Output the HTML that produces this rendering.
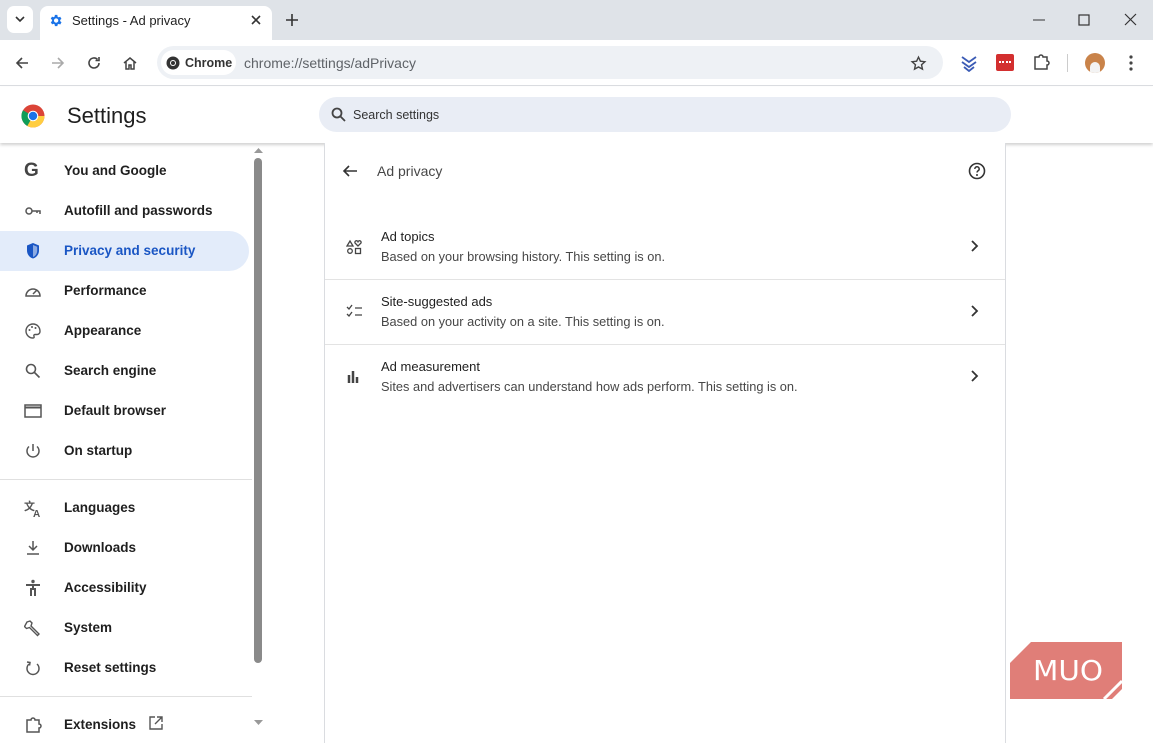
<!DOCTYPE html>
<html><head><meta charset="utf-8"><style>
*{box-sizing:border-box;margin:0;padding:0}
body{width:1153px;height:731px;overflow:hidden;background:#fff;font-family:"Liberation Sans",Arial,sans-serif;position:relative;color:#1f1f1f}
.abs{position:absolute}
.tabbar{left:0;top:0;width:1153px;height:40px;background:#dfe3e8}
.tab{left:40px;top:6px;width:232px;height:34px;background:#fff;border-radius:8px 8px 0 0}
.toolbar{left:0;top:40px;width:1153px;height:46px;background:#fff;border-bottom:1px solid #dadce0}
.omni{left:157px;top:46px;width:786px;height:33px;background:#eef1f5;border-radius:17px}
.chip{left:161px;top:50px;width:75px;height:25px;background:#fff;border-radius:13px}
.hdr{left:0;top:87px;width:1153px;height:56px;background:#fff;box-shadow:0 2px 3px rgba(0,0,0,.18)}
.search{left:319px;top:97px;width:692px;height:35px;background:#e9edf5;border-radius:18px}
.nav{left:0;font-size:13.5px;font-weight:bold;color:#1f1f1f;height:40px;line-height:40px;padding-left:64px;width:249px;white-space:nowrap}
.nav.sel{background:#e3ecfa;color:#1a56c4;border-radius:0 20px 20px 0}
.ic{position:absolute;left:24px;top:11px;width:18px;height:18px}
.card{left:324px;top:143px;width:682px;height:600px;border-left:1px solid #dadce0;border-right:1px solid #dadce0;background:#fff}
.row{left:325px;width:680px;height:65px}
.row .t{position:absolute;left:56px;top:14px;font-size:13px;color:#1f1f1f}
.row .s{position:absolute;left:56px;top:34px;font-size:12.8px;color:#474747}
.row .ch{position:absolute;right:26px;top:24px}
.sep{left:325px;width:680px;height:1px;background:#e3e3e3}
</style></head><body>
<div class="abs tabbar"></div>
<div class="abs" style="left:7px;top:6px;width:26px;height:27px;background:#fff;border-radius:7px"></div>
<svg class="abs" style="left:14px;top:14px" width="12" height="10"><path d="M2 3l4 4 4-4" stroke="#333" stroke-width="1.6" fill="none"/></svg>
<div class="abs tab"></div>
<svg class="abs" style="left:48px;top:13px" width="15" height="15" viewBox="0 0 24 24"><path fill="#1a73e8" d="M19.4 13a7.5 7.5 0 000-2l2.1-1.6-2-3.5-2.5 1a7 7 0 00-1.7-1L15 3h-4l-.4 2.7a7 7 0 00-1.7 1l-2.500-1-2 3.5L6.6 11a7.5 7.5 0 000 2l-2.1 1.6 2 3.5 2.5-1a7 7 0 001.7 1L11 21h4l.4-2.7a7 7 0 001.7-1l2.5 1 2-3.5zM13 15.5a3.5 3.5 0 110-7 3.5 3.5 0 010 7z"/></svg>
<div class="abs" style="left:72px;top:13px;font-size:13px;color:#1f1f1f">Settings - Ad privacy</div>
<svg class="abs" style="left:250px;top:14px" width="12" height="12"><path d="M2 2l8 8M10 2l-8 8" stroke="#333" stroke-width="1.6"/></svg>
<svg class="abs" style="left:285px;top:13px" width="14" height="14"><path d="M7 1v12M1 7h12" stroke="#333" stroke-width="1.6"/></svg>
<svg class="abs" style="left:1033px;top:19px" width="12" height="2"><path d="M0 1h12" stroke="#333"/></svg>
<svg class="abs" style="left:1078px;top:14px" width="12" height="12"><rect x="1" y="1" width="10" height="10" fill="none" stroke="#333" stroke-width="1.2"/></svg>
<svg class="abs" style="left:1124px;top:13px" width="13" height="13"><path d="M1 1l11 11M12 1L1 12" stroke="#333" stroke-width="1.2"/></svg>

<div class="abs toolbar"></div>
<svg class="abs" style="left:14px;top:55px" width="16" height="16"><path d="M14 8H3M8 3L3 8l5 5" stroke="#444" stroke-width="1.6" fill="none"/></svg>
<svg class="abs" style="left:50px;top:55px" width="16" height="16"><path d="M2 8h11M8 3l5 5-5 5" stroke="#aaa" stroke-width="1.6" fill="none"/></svg>
<svg class="abs" style="left:86px;top:55px" width="16" height="16"><path d="M13 8a5 5 0 11-1.5-3.6M13 2v3.5H9.5" stroke="#444" stroke-width="1.6" fill="none"/></svg>
<svg class="abs" style="left:122px;top:55px" width="16" height="16"><path d="M2 8l6-5 6 5M4 6.5V14h3v-4h2v4h3V6.5" stroke="#444" stroke-width="1.5" fill="none"/></svg>
<div class="abs omni"></div>
<div class="abs chip"></div>
<svg class="abs" style="left:166px;top:56px" width="14" height="14" viewBox="0 0 14 14"><circle cx="7" cy="7" r="6.5" fill="#333"/><circle cx="7" cy="7" r="3" fill="#fff"/><circle cx="7" cy="7" r="2" fill="#333"/></svg>
<div class="abs" style="left:185px;top:56px;font-size:12.5px;font-weight:bold;color:#333">Chrome</div>
<div class="abs" style="left:244px;top:55px;font-size:14px;color:#5f6368">chrome://settings/adPrivacy</div>
<svg class="abs" style="left:910px;top:55px" width="17" height="17" viewBox="0 0 24 24"><path d="M12 3l2.7 5.8 6.3.7-4.7 4.3 1.3 6.2L12 16.9 6.4 20l1.3-6.2L3 9.5l6.3-.7z" fill="none" stroke="#444" stroke-width="2"/></svg>
<svg class="abs" style="left:960px;top:54px" width="18" height="18"><path d="M2 3l7 5 7-5M2 8l7 5 7-5M4 13l5 4 5-4" stroke="#3b5bb5" stroke-width="1.8" fill="none"/></svg>
<div class="abs" style="left:996px;top:54px;width:18px;height:17px;background:#d32f2f;border-radius:2px"></div>
<div class="abs" style="left:999px;top:61px;width:12px;height:3px;border-top:2px dotted #fff"></div>
<svg class="abs" style="left:1032px;top:53px" width="18" height="18"><path d="M3 4h4a2 2 0 014 0h4v4a2 2 0 010 4v4H3z" fill="none" stroke="#444" stroke-width="1.5"/></svg>
<div class="abs" style="left:1067px;top:54px;width:1px;height:18px;background:#ccc"></div>
<div class="abs" style="left:1085px;top:53px;width:20px;height:20px;border-radius:50%;background:#c9834a;overflow:hidden"><div style="position:absolute;left:5px;top:9px;width:10px;height:12px;background:#f3f3f3;border-radius:5px 5px 0 0"></div></div>
<svg class="abs" style="left:1128px;top:54px" width="6" height="18"><circle cx="3" cy="3" r="1.6" fill="#444"/><circle cx="3" cy="9" r="1.6" fill="#444"/><circle cx="3" cy="15" r="1.6" fill="#444"/></svg>

<div class="abs hdr"></div>
<svg class="abs" style="left:21px;top:104px" width="24" height="24" viewBox="0 0 24 24"><circle cx="12" cy="12" r="11.5" fill="#db4437"/><path d="M12 12L2 6.2A11.5 11.5 0 006.3 22z" fill="#0f9d58"/><path d="M12 12l-5.7 10A11.5 11.5 0 0023.5 12z" fill="#ffcd40"/><circle cx="12" cy="12" r="5.3" fill="#fff"/><circle cx="12" cy="12" r="4.2" fill="#1a73e8"/></svg>
<div class="abs" style="left:67px;top:103px;font-size:22px;color:#1f1f1f">Settings</div>
<div class="abs search"></div>
<svg class="abs" style="left:331px;top:107px" width="15" height="15"><circle cx="6" cy="6" r="4.5" fill="none" stroke="#444" stroke-width="1.8"/><path d="M9.5 9.5l4.5 4.5" stroke="#444" stroke-width="1.8"/></svg>
<div class="abs" style="left:353px;top:108px;font-size:12.5px;color:#333">Search settings</div>

<div class="abs nav" style="top:151px"><span class="ic" style="font-weight:bold;font-size:19px;line-height:18px;color:#444;top:11px">G</span>You and Google</div>
<div class="abs nav" style="top:191px"><svg class="ic" viewBox="0 0 18 18"><circle cx="5" cy="9" r="3" fill="none" stroke="#555" stroke-width="1.5"/><path d="M8 9h8v3M13 9v2" stroke="#555" stroke-width="1.5" fill="none"/></svg>Autofill and passwords</div>
<div class="abs nav sel" style="top:231px"><svg class="ic" viewBox="0 0 18 18"><path d="M9 1L3 3.5v5c0 4 2.6 7 6 8 3.4-1 6-4 6-8v-5z" fill="#1a56c4"/><path d="M9 3v12c2.4-.9 4.2-3.3 4.2-6.5V4.7z" fill="#fff" opacity=".5"/></svg>Privacy and security</div>
<div class="abs nav" style="top:271px"><svg class="ic" viewBox="0 0 18 18"><path d="M2 14a7 7 0 1114 0z" fill="none" stroke="#555" stroke-width="1.5"/><path d="M9 12l4-4" stroke="#555" stroke-width="1.5"/></svg>Performance</div>
<div class="abs nav" style="top:311px"><svg class="ic" viewBox="0 0 18 18"><path d="M9 2a7 7 0 000 14c1 0 1.5-.8 1-1.6-.5-.9 0-1.9 1-1.9h2a3 3 0 003-3C16 5 13 2 9 2z" fill="none" stroke="#555" stroke-width="1.4"/><circle cx="5.5" cy="8" r="1" fill="#555"/><circle cx="8" cy="5" r="1" fill="#555"/><circle cx="11.5" cy="6" r="1" fill="#555"/></svg>Appearance</div>
<div class="abs nav" style="top:351px"><svg class="ic" viewBox="0 0 18 18"><circle cx="7" cy="7" r="4.5" fill="none" stroke="#555" stroke-width="1.6"/><path d="M10.5 10.5l5 5" stroke="#555" stroke-width="1.6"/></svg>Search engine</div>
<div class="abs nav" style="top:391px"><svg class="ic" viewBox="0 0 18 18"><rect x="1" y="3" width="16" height="12" fill="none" stroke="#555" stroke-width="1.5"/><path d="M1 5.5h16" stroke="#555" stroke-width="2"/></svg>Default browser</div>
<div class="abs nav" style="top:431px"><svg class="ic" viewBox="0 0 18 18"><path d="M9 2v7M5 4.5a6 6 0 108 0" fill="none" stroke="#555" stroke-width="1.5"/></svg>On startup</div>
<div class="abs" style="left:0;top:479px;width:252px;height:1px;background:#e0e0e0"></div>
<div class="abs nav" style="top:488px"><svg class="ic" viewBox="0 0 18 18"><text x="0" y="11" font-size="11" fill="#555" font-family="Noto Sans CJK SC,sans-serif">文</text><text x="9" y="18" font-size="10" fill="#555" font-family="Liberation Sans,sans-serif">A</text></svg>Languages</div>
<div class="abs nav" style="top:528px"><svg class="ic" viewBox="0 0 18 18"><path d="M9 2v9M5 7l4 4 4-4M3 15h12" fill="none" stroke="#555" stroke-width="1.5"/></svg>Downloads</div>
<div class="abs nav" style="top:568px"><svg class="ic" viewBox="0 0 18 18"><circle cx="9" cy="2.5" r="1.7" fill="#555"/><path d="M2 6h14M9 6v5M7 17V10h4v7" stroke="#555" stroke-width="2" fill="none"/></svg>Accessibility</div>
<div class="abs nav" style="top:608px"><svg class="ic" viewBox="0 0 18 18"><path d="M3 3l3-1 2 2-1 3 8 8-1.5 1.5-8-8-3 1-2-2z" fill="none" stroke="#555" stroke-width="1.4"/></svg>System</div>
<div class="abs nav" style="top:648px"><svg class="ic" viewBox="0 0 18 18"><path d="M5 5a6 6 0 108 0" fill="none" stroke="#555" stroke-width="1.5"/><path d="M3 3l3 .5-.5 3" stroke="#555" stroke-width="1.5" fill="none"/></svg>Reset settings</div>
<div class="abs" style="left:0;top:696px;width:252px;height:1px;background:#e0e0e0"></div>
<div class="abs nav" style="top:705px"><svg class="ic" viewBox="0 0 18 18"><path d="M3 4h4a2 2 0 014 0h4v4a2 2 0 010 4v4H3z" fill="none" stroke="#555" stroke-width="1.5"/></svg>Extensions <svg style="vertical-align:-2px;margin-left:8px" width="16" height="16"><path d="M7 2H2v12h12V9M9 2h5v5M14 2L7 9" fill="none" stroke="#555" stroke-width="1.4"/></svg></div>
<div class="abs" style="left:254px;top:158px;width:8px;height:505px;background:#8a8a8a;border-radius:4px"></div>
<svg class="abs" style="left:254px;top:147px" width="9" height="7"><path d="M0 6l4.5-5 4.5 5z" fill="#999"/></svg>
<svg class="abs" style="left:254px;top:719px" width="9" height="7"><path d="M0 1l4.5 5 4.5-5z" fill="#999"/></svg>

<div class="abs card"></div>
<svg class="abs" style="left:342px;top:163px" width="16" height="16"><path d="M15 8H2M7 3L2 8l5 5" stroke="#333" stroke-width="1.6" fill="none"/></svg>
<div class="abs" style="left:377px;top:163px;font-size:14px;color:#474747">Ad privacy</div>
<svg class="abs" style="left:968px;top:162px" width="18" height="18"><circle cx="9" cy="9" r="7.5" fill="none" stroke="#333" stroke-width="1.6"/><path d="M6.8 7a2.2 2.2 0 114 1.2c-.8.6-1.8 1-1.8 2.3" fill="none" stroke="#333" stroke-width="1.5"/><circle cx="9" cy="13" r="1" fill="#333"/></svg>

<div class="abs row" style="top:215px"><svg style="position:absolute;left:21px;top:24px" width="16" height="16"><path d="M1 7l3-5 3 5z" fill="none" stroke="#444" stroke-width="1.3"/><path d="M12 7l-3-3a1.5 1.5 0 013-1.3A1.5 1.5 0 0115 4z" fill="none" stroke="#444" stroke-width="1.3"/><circle cx="4" cy="12" r="2.3" fill="none" stroke="#444" stroke-width="1.3"/><rect x="9.5" y="9.5" width="5" height="5" fill="none" stroke="#444" stroke-width="1.3"/></svg><div class="t">Ad topics</div><div class="s">Based on your browsing history. This setting is on.</div><svg class="ch" width="10" height="14"><path d="M3 2l5 5-5 5" stroke="#333" stroke-width="1.8" fill="none"/></svg></div>
<div class="abs sep" style="top:279px"></div>
<div class="abs row" style="top:280px"><svg style="position:absolute;left:21px;top:24px" width="17" height="14"><path d="M1 3l2 2 3-4M1 10l2 2 3-4M9 4h7M9 11h7" stroke="#444" stroke-width="1.3" fill="none"/></svg><div class="t">Site-suggested ads</div><div class="s">Based on your activity on a site. This setting is on.</div><svg class="ch" width="10" height="14"><path d="M3 2l5 5-5 5" stroke="#333" stroke-width="1.8" fill="none"/></svg></div>
<div class="abs sep" style="top:344px"></div>
<div class="abs row" style="top:345px"><svg style="position:absolute;left:22px;top:26px" width="14" height="12"><path d="M2 4v8M6 0v12M10 6v6" stroke="#444" stroke-width="2.5"/></svg><div class="t">Ad measurement</div><div class="s">Sites and advertisers can understand how ads perform. This setting is on.</div><svg class="ch" width="10" height="14"><path d="M3 2l5 5-5 5" stroke="#333" stroke-width="1.8" fill="none"/></svg></div>

<svg class="abs" style="left:1009px;top:641px" width="114" height="58"><path d="M22 1H113V48L103 58H1V22z" fill="#e07e78"/><path d="M113 40L95 58" stroke="#fff" stroke-width="3"/><text x="24" y="39" font-size="28" fill="#fff" font-family="DejaVu Sans,sans-serif" font-weight="normal" textLength="70" lengthAdjust="spacingAndGlyphs" style="font-stretch:condensed">MUO</text></svg>
</body></html>
